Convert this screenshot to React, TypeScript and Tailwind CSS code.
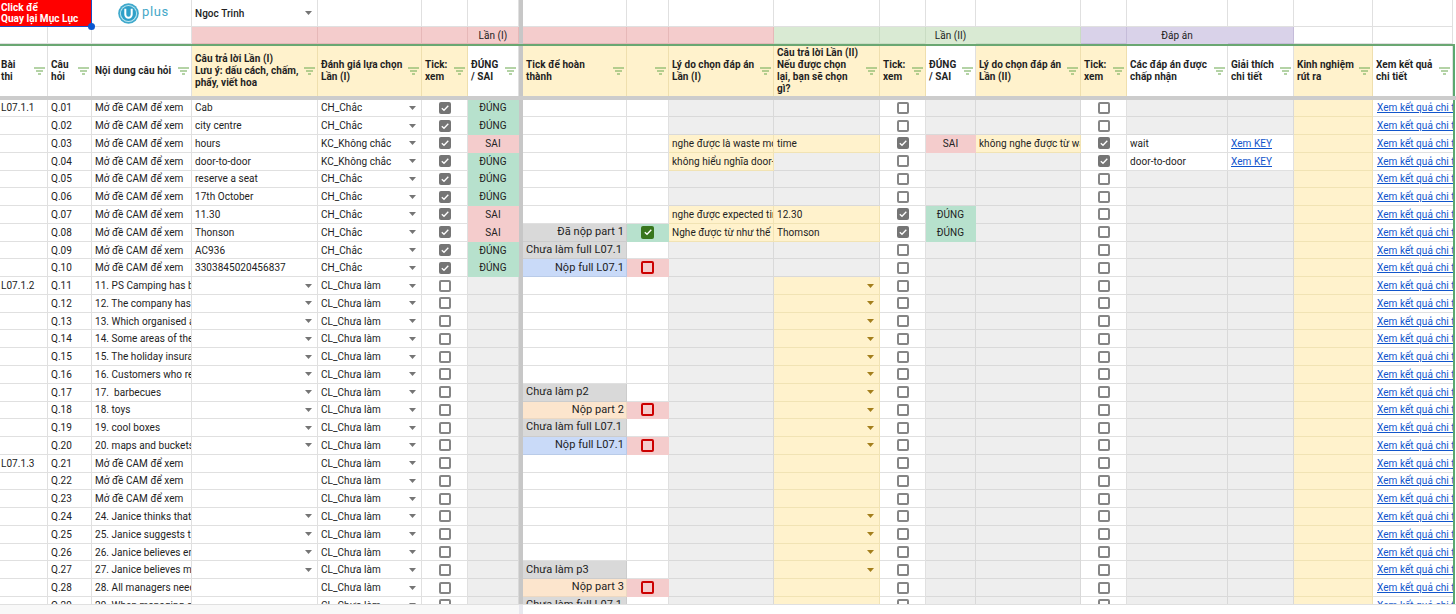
import React from "react";

const COLS =
  "grid grid-cols-[48px_44px_100px_126px_104px_46px_51px_4px_104px_42px_105px_106px_46px_50px_105px_46px_101px_66px_79px_80px_3px]";

const BASE = "flex items-center overflow-hidden whitespace-pre border-r border-b min-w-0";
const WHITE = "bg-white border-[#e0e0e0]";
const GRAY = "bg-[#eeeeee] border-[#d9d9d9]";
const YELLOW = "bg-[#fff2cc] border-[#f1e3b4]";
const GREEN = "bg-[#b7e1cd] border-[#b7e1cd]";
const PINK = "bg-[#f4cccc] border-[#f4cccc]";
const DARK = "bg-[#d9d9d9] border-[#cccccc]";
const ORANGE = "bg-[#fce5cd] border-[#ecd8c2]";
const BLUE = "bg-[#c9daf8] border-[#b9cbe8]";

function Arrow({ dark }: { dark?: boolean }) {
  return (
    <svg width="7" height="4" viewBox="0 0 7 4" className="ml-auto mr-[2px] shrink-0">
      <polygon points="0,0 7,0 3.5,4" fill={dark ? "#a47f1c" : "#757575"} />
    </svg>
  );
}

function Box({ kind }: { kind: "off" | "on" | "red" | "green" }) {
  if (kind === "off") return <span className="block w-[12px] h-[12px] rounded-[2px] border-2 border-[#858585] bg-white" />;
  if (kind === "red") return <span className="block w-[13px] h-[13px] rounded-[2px] border-2 border-[#cc0000]" />;
  return (
    <span
      className={
        kind === "on"
          ? "flex items-center justify-center w-[12px] h-[12px] rounded-[2px] bg-[#757575]"
          : "flex items-center justify-center w-[13px] h-[13px] rounded-[2px] bg-[#38761d]"
      }
    >
      <svg width="10" height="10" viewBox="0 0 10 10">
        <path d="M1.8 5.2 L4 7.3 L8.3 2.8" fill="none" stroke="#ffffff" strokeWidth="1.3" />
      </svg>
    </span>
  );
}

function Filter() {
  return (
    <svg width="11" height="8" viewBox="0 0 11 8" className="shrink-0 ml-auto">
      <path d="M0 1 H11 M2 4 H9 M4 7 H7" stroke="#6aa84f" strokeWidth="1.2" fill="none" />
    </svg>
  );
}

function Cell({
  tone = WHITE,
  align = "justify-start",
  pad = "px-[3px]",
  children,
}: {
  tone?: string;
  align?: string;
  pad?: string;
  children?: React.ReactNode;
}) {
  return <div className={`${BASE} ${tone} ${align} ${pad}`}>{children}</div>;
}

function Gutter() {
  return <div className="bg-[#c7c7c7]" />;
}

function Head({ yellow, lines, pad = "pl-[3px]" }: { yellow?: boolean; lines: string[]; pad?: string }) {
  return (
    <div className={`flex items-center border-r pr-[2px] min-w-0 ${pad} ${yellow ? "bg-[#fff2cc] border-[#efdfae]" : "bg-white border-[#e0e0e0]"}`}>
      <div className="font-bold tracking-[0.05px] leading-[11.8px] text-[#1f1f1f] whitespace-nowrap">
        {lines.map((l) => (
          <div key={l}>{l}</div>
        ))}
      </div>
      <Filter />
    </div>
  );
}

const D_TEXT = ["Cab", "city centre", "hours", "door-to-door", "reserve a seat", "17th October", "11.30", "Thonson", "AC936", "3303845020456837"];
const C_TEXT: Record<number, string> = {
  11: "11. PS Camping has been",
  12: "12. The company has",
  13: "13. Which organised activity",
  14: "14. Some areas of the",
  15: "15. The holiday insurance",
  16: "16. Customers who return",
  17: "17.  barbecues",
  18: "18. toys",
  19: "19. cool boxes",
  20: "20. maps and buckets",
  24: "24. Janice thinks that",
  25: "25. Janice suggests that",
  26: "26. Janice believes employees",
  27: "27. Janice believes managers",
  28: "28. All managers need",
  29: "29. When managing others",
};
const WRONG = [3, 7, 8];
const J_TEXT: Record<number, string> = {
  3: "nghe được là waste money",
  4: "không hiểu nghĩa door-to-door",
  7: "nghe được expected time",
  8: "Nghe được từ như thế",
};
const K_TEXT: Record<number, string> = { 3: "time", 7: "12.30", 8: "Thomson" };
const A_TEXT: Record<number, string> = { 1: "L07.1.1", 11: "L07.1.2", 21: "L07.1.3" };
const NO_ARROW = [21, 22, 23, 28, 29];

function Mark({ children }: { children: React.ReactNode }) {
  return <span className="text-[11px]">{children}</span>;
}

function hCell(i: number) {
  if (i === 8) return <Cell tone={DARK} align="justify-end" pad="pl-[3px] pr-[2px]"><Mark>Đã nộp part 1</Mark></Cell>;
  if (i === 9 || i === 19 || i === 29) return <Cell tone={DARK}><Mark>Chưa làm full L07.1</Mark></Cell>;
  if (i === 10 || i === 20) return <Cell tone={BLUE} align="justify-end" pad="pl-[3px] pr-[2px]"><Mark>Nộp full L07.1</Mark></Cell>;
  if (i === 17) return <Cell tone={DARK}><Mark>Chưa làm p2</Mark></Cell>;
  if (i === 18) return <Cell tone={ORANGE} align="justify-end" pad="pl-[3px] pr-[2px]"><Mark>Nộp part 2</Mark></Cell>;
  if (i === 27) return <Cell tone={DARK}><Mark>Chưa làm p3</Mark></Cell>;
  if (i === 28) return <Cell tone={ORANGE} align="justify-end" pad="pl-[3px] pr-[2px]"><Mark>Nộp part 3</Mark></Cell>;
  return <Cell />;
}

function iCell(i: number) {
  if (i === 8) return <Cell tone={GREEN} align="justify-center" pad="px-0"><Box kind="green" /></Cell>;
  if ([10, 18, 20, 28].includes(i)) return <Cell tone={PINK} align="justify-center" pad="px-0"><Box kind="red" /></Cell>;
  return <Cell />;
}

function Row({ i }: { i: number }) {
  const first = i <= 10;
  const q = `Q.${String(i).padStart(2, "0")}`;
  const cText = C_TEXT[i] ?? "Mở đề CAM để xem";
  const eText = first ? (i === 3 || i === 4 ? "KC_Không chắc" : "CH_Chắc") : "CL_Chưa làm";
  const arrows = !first && !NO_ARROW.includes(i);
  const grade = first ? (WRONG.includes(i) ? "SAI" : "ĐÚNG") : "";
  const secondGrade = i === 3 ? "SAI" : i === 7 || i === 8 ? "ĐÚNG" : "";
  const reviewed = i === 3 || i === 4;
  return (
    <div className={`${COLS} h-[17.78px]`}>
      <Cell pad="pl-[1px]">{A_TEXT[i] ?? ""}</Cell>
      <Cell>{q}</Cell>
      <Cell>{cText}</Cell>
      <Cell>
        {first ? D_TEXT[i - 1] : ""}
        {arrows && <Arrow />}
      </Cell>
      <Cell>
        {eText}
        <Arrow />
      </Cell>
      <Cell align="justify-center" pad="px-0"><Box kind={first ? "on" : "off"} /></Cell>
      <Cell tone={first ? (WRONG.includes(i) ? PINK : GREEN) : GRAY} align="justify-center">{grade}</Cell>
      <Gutter />
      {hCell(i)}
      {iCell(i)}
      <Cell tone={J_TEXT[i] ? YELLOW : GRAY}>{J_TEXT[i] ?? ""}</Cell>
      <Cell tone={first && !K_TEXT[i] ? GRAY : YELLOW}>
        {K_TEXT[i] ?? ""}
        {arrows && <Arrow dark />}
      </Cell>
      <Cell align="justify-center" pad="px-0"><Box kind={WRONG.includes(i) ? "on" : "off"} /></Cell>
      <Cell tone={i === 3 ? PINK : i === 7 || i === 8 ? GREEN : GRAY} align="justify-center">{secondGrade}</Cell>
      <Cell tone={i === 3 ? YELLOW : GRAY}>{i === 3 ? "không nghe được từ wait" : ""}</Cell>
      <Cell align="justify-center" pad="px-0"><Box kind={reviewed ? "on" : "off"} /></Cell>
      <Cell tone={reviewed ? WHITE : GRAY}>{i === 3 ? "wait" : i === 4 ? "door-to-door" : ""}</Cell>
      <Cell tone={reviewed ? WHITE : GRAY}>
        {reviewed && <a className="text-[#1155cc] underline">Xem KEY</a>}
      </Cell>
      <Cell tone={YELLOW} />
      <div className="flex items-center overflow-hidden whitespace-nowrap pl-[4px] bg-white min-w-0 col-span-1 border-b border-[#e0e0e0]">
        <a className="text-[#1155cc] underline">Xem kết quả chi tiết</a>
      </div>
      <div className="bg-[#5aa86f] w-[2px]" />
    </div>
  );
}

function Logo() {
  return (
    <div className="flex items-center gap-[3px] pl-[26px]">
      <svg width="21" height="21" viewBox="0 0 21 21" className="shrink-0">
        <circle cx="10.5" cy="10.5" r="10.3" fill="#3fa9cc" />
        <circle cx="10.5" cy="10.5" r="8.6" fill="#bfe6f0" />
        <circle cx="10.5" cy="10.5" r="7.6" fill="#2fa0c8" />
        <path d="M7.3 5.8 V11.5 a3.2 3.2 0 0 0 6.4 0 V5.8" fill="none" stroke="#ffffff" strokeWidth="2" />
      </svg>
      <span className="text-[13px] leading-none text-[#45a8c8] tracking-[0.6px] mb-[4px]">plus</span>
    </div>
  );
}

export default function App() {
  const rows = Array.from({ length: 29 }, (_, k) => k + 1);
  return (
    <div className="w-[1456px] h-[614px] overflow-hidden bg-white flex flex-col font-['Roboto',sans-serif] text-[10px] tracking-[0.05px] text-[#222222]">
      <div className={`${COLS} h-[27px] shrink-0`}>
        <div className="relative col-span-2 bg-[#ff0000] border-r border-b border-[#1a4fc5] flex flex-col justify-center pl-[1px] text-white font-bold leading-[11.5px]">
          <div>Click để</div>
          <div>Quay lại Mục Lục</div>
          <span className="absolute right-[-4px] bottom-[-4px] w-[7px] h-[7px] rounded-full bg-[#0b57d0] z-10" />
        </div>
        <Cell pad="px-0" align="justify-start"><Logo /></Cell>
        <Cell>
          <span className="font-medium">Ngoc Trinh</span>
          <Arrow />
        </Cell>
        <Cell />
        <Cell />
        <Cell />
        <Gutter />
        {Array.from({ length: 12 }, (_, k) => <Cell key={k} />)}
        <div />
      </div>

      <div className={`${COLS} h-[17px] shrink-0`}>
        <Cell />
        <Cell />
        <Cell />
        <Cell tone="bg-[#f4cccc] border-[#e6b8b8]" />
        <Cell tone="bg-[#f4cccc] border-[#e6b8b8]" />
        <Cell tone="bg-[#f4cccc] border-[#e6b8b8]" />
        <Cell tone="bg-[#f4cccc] border-[#e6b8b8]" align="justify-center">Lần (I)</Cell>
        <Gutter />
        <Cell tone="bg-[#f4cccc] border-[#e6b8b8]" />
        <Cell tone="bg-[#f4cccc] border-[#e6b8b8]" />
        <Cell tone="bg-[#f4cccc] border-[#e6b8b8]" />
        <Cell tone="bg-[#d9ead3] border-[#c9dcc3]" />
        <Cell tone="bg-[#d9ead3] border-[#c9dcc3]" />
        <Cell tone="bg-[#d9ead3] border-[#d9ead3]" align="justify-center">Lần (II)</Cell>
        <Cell tone="bg-[#d9ead3] border-[#c9dcc3]" />
        <Cell tone="bg-[#d9d2e9] border-[#c5bcd9]" />
        <Cell tone="bg-[#d9d2e9] border-[#d9d2e9]" align="justify-center">Đáp án</Cell>
        <Cell tone="bg-[#d9d2e9] border-[#c5bcd9]" />
        <Cell />
        <Cell />
        <div />
      </div>

      <div className="h-[2px] w-[1455px] bg-[#6aa772] shrink-0" />

      <div className={`${COLS} h-[50px] shrink-0`}>
        <Head pad="pl-[1px]" lines={["Bài", "thi"]} />
        <Head lines={["Câu", "hỏi"]} />
        <Head lines={["Nội dung câu hỏi"]} />
        <Head yellow lines={["Câu trả lời Lần (I)", "Lưu ý: dấu cách, chấm,", "phẩy, viết hoa"]} />
        <Head yellow lines={["Đánh giá lựa chọn", "Lần (I)"]} />
        <Head yellow lines={["Tick:", "xem"]} />
        <Head lines={["ĐÚNG", "/ SAI"]} />
        <Gutter />
        <Head yellow lines={["Tick để hoàn", "thành"]} />
        <Head yellow lines={[""]} />
        <Head yellow lines={["Lý do chọn đáp án", "Lần (I)"]} />
        <Head yellow lines={["Câu trả lời Lần (II)", "Nếu được chọn", "lại, bạn sẽ chọn", "gì?"]} />
        <Head yellow lines={["Tick:", "xem"]} />
        <Head lines={["ĐÚNG", "/ SAI"]} />
        <Head yellow lines={["Lý do chọn đáp án", "Lần (II)"]} />
        <Head yellow lines={["Tick:", "xem"]} />
        <Head lines={["Các đáp án được", "chấp nhận"]} />
        <Head lines={["Giải thích", "chi tiết"]} />
        <Head yellow lines={["Kinh nghiệm", "rút ra"]} />
        <Head lines={["Xem kết quả", "chi tiết"]} />
        <div className="bg-[#5aa86f] w-[2px]" />
      </div>

      <div className="h-[3.5px] bg-[#cccccc] shrink-0" />

      <div className="h-[504.5px] shrink-0 overflow-hidden">
        {rows.map((i) => (
          <Row key={i} i={i} />
        ))}
      </div>

      <div className="flex-1 flex border-t border-[#e0e0e0]">
        <div className="w-[519px] bg-[#f8f8f8]" />
        <div className="w-[4px] bg-[#e8e8ee]" />
        <div className="flex-1 bg-white" />
      </div>
    </div>
  );
}
